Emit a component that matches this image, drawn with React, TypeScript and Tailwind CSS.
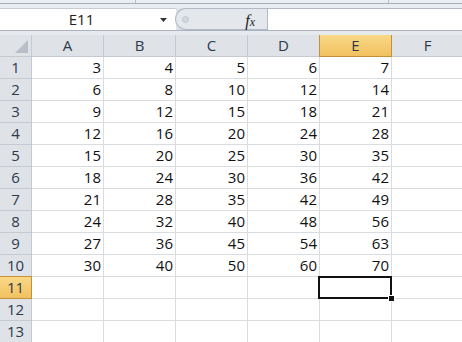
const cols = ['A', 'B', 'C', 'D', 'E', 'F']
const mult = [3, 4, 5, 6, 7]

function FxIcon() {
  return (
    <span className="italic font-['Liberation_Serif',serif] text-[16px] text-[#222] leading-none">
      f<span className="text-[12px]">x</span>
    </span>
  )
}

export default function App() {
  const rows = Array.from({ length: 13 }, (_, i) => i + 1)
  return (
    <div className="w-[462px] h-[342px] overflow-hidden bg-white font-['Open_Sans',sans-serif] select-none">
      {/* ribbon edge */}
      <div className="h-[8px] bg-[#e9ecf0] flex">
        <div className="w-[136px] h-[3px] border-r border-[#b9c0c9]" />
        <div className="w-[253px] h-[3px] border-r border-[#b9c0c9]" />
      </div>
      <div className="h-[1px] bg-[#a7afba] -mt-[5px] mb-[4px]" />

      {/* formula bar */}
      <div className="h-[23px] flex bg-[#dfe3e8] border-b border-[#a9b2bd]">
        <div className="w-[176px] bg-white border-t border-[#c7ccd3] flex items-center relative">
          <span className="flex-1 text-center text-[15px] text-[#222] pl-[4px]">E11</span>
          <svg className="w-[9px] h-[6px] mr-[8px]" viewBox="0 0 9 6">
            <path d="M1 1h7L4.5 5z" fill="#333" />
          </svg>
        </div>
        <div className="w-[92px] flex items-center rounded-l-full bg-[#e4e7eb] border border-[#b3bac4] border-r-0 -ml-[1px] relative">
          <div className="w-[7px] h-[7px] rounded-full bg-[#d3d7dc] border border-[#c3c8ce] ml-[6px]" />
          <div className="flex-1" />
          <div className="mr-[12px] mt-[1px]">
            <FxIcon />
          </div>
        </div>
        <div className="flex-1 bg-white border-t border-l border-[#b3bac4]" />
      </div>
      <div className="h-[4px] bg-[#e6e9ed]" />

      {/* grid */}
      <div className="grid grid-cols-[32px_repeat(6,72px)] auto-rows-[22px] text-[15px]">
        <div className="bg-[#dfe3e8] border-r border-b border-[#c5cad1] relative">
          <svg className="absolute right-[3px] bottom-[3px] w-[13px] h-[13px]" viewBox="0 0 13 13">
            <path d="M13 0V13H0z" fill="#b8bec6" />
          </svg>
        </div>
        {cols.map((c) =>
          c === 'E' ? (
            <div
              key={c}
              className="bg-gradient-to-b from-[#f9d887] to-[#f1c15f] border-r border-b border-[#c2913a] shadow-[-1px_0_0_#c2913a] flex items-center justify-center text-[#2b3a4c]"
            >
              {c}
            </div>
          ) : (
            <div
              key={c}
              className="bg-[#dfe3e8] border-r border-b border-[#c5cad1] flex items-center justify-center text-[#2b3a4c]"
            >
              {c}
            </div>
          )
        )}
        {rows.map((r) => (
          <Row key={r} r={r} />
        ))}
      </div>
    </div>
  )
}

function Row({ r }: { r: number }) {
  const active = r === 11
  return (
    <>
      <div
        className={
          active
            ? 'bg-gradient-to-b from-[#f9d887] to-[#f1c15f] border-r border-b border-[#c2913a] shadow-[0_-1px_0_#c2913a] flex items-center justify-center text-[#2b3a4c]'
            : 'bg-[#dfe3e8] border-r border-b border-[#c5cad1] flex items-center justify-center text-[#2b3a4c]'
        }
      >
        {r}
      </div>
      {cols.map((c, i) => (
        <div
          key={c}
          className="border-r border-b border-[#dadcdd] flex items-center justify-end pr-[2px] text-[#111] relative"
        >
          {r <= 10 && i < 5 ? mult[i] * r : ''}
          {active && c === 'E' && (
            <div className="absolute -left-[2px] -top-[1px] -right-[1px] -bottom-[1px] border-2 border-[#111] z-10">
              <div className="absolute -right-[5px] -bottom-[5px] w-[7px] h-[7px] bg-[#111] border border-white" />
            </div>
          )}
        </div>
      ))}
    </>
  )
}
